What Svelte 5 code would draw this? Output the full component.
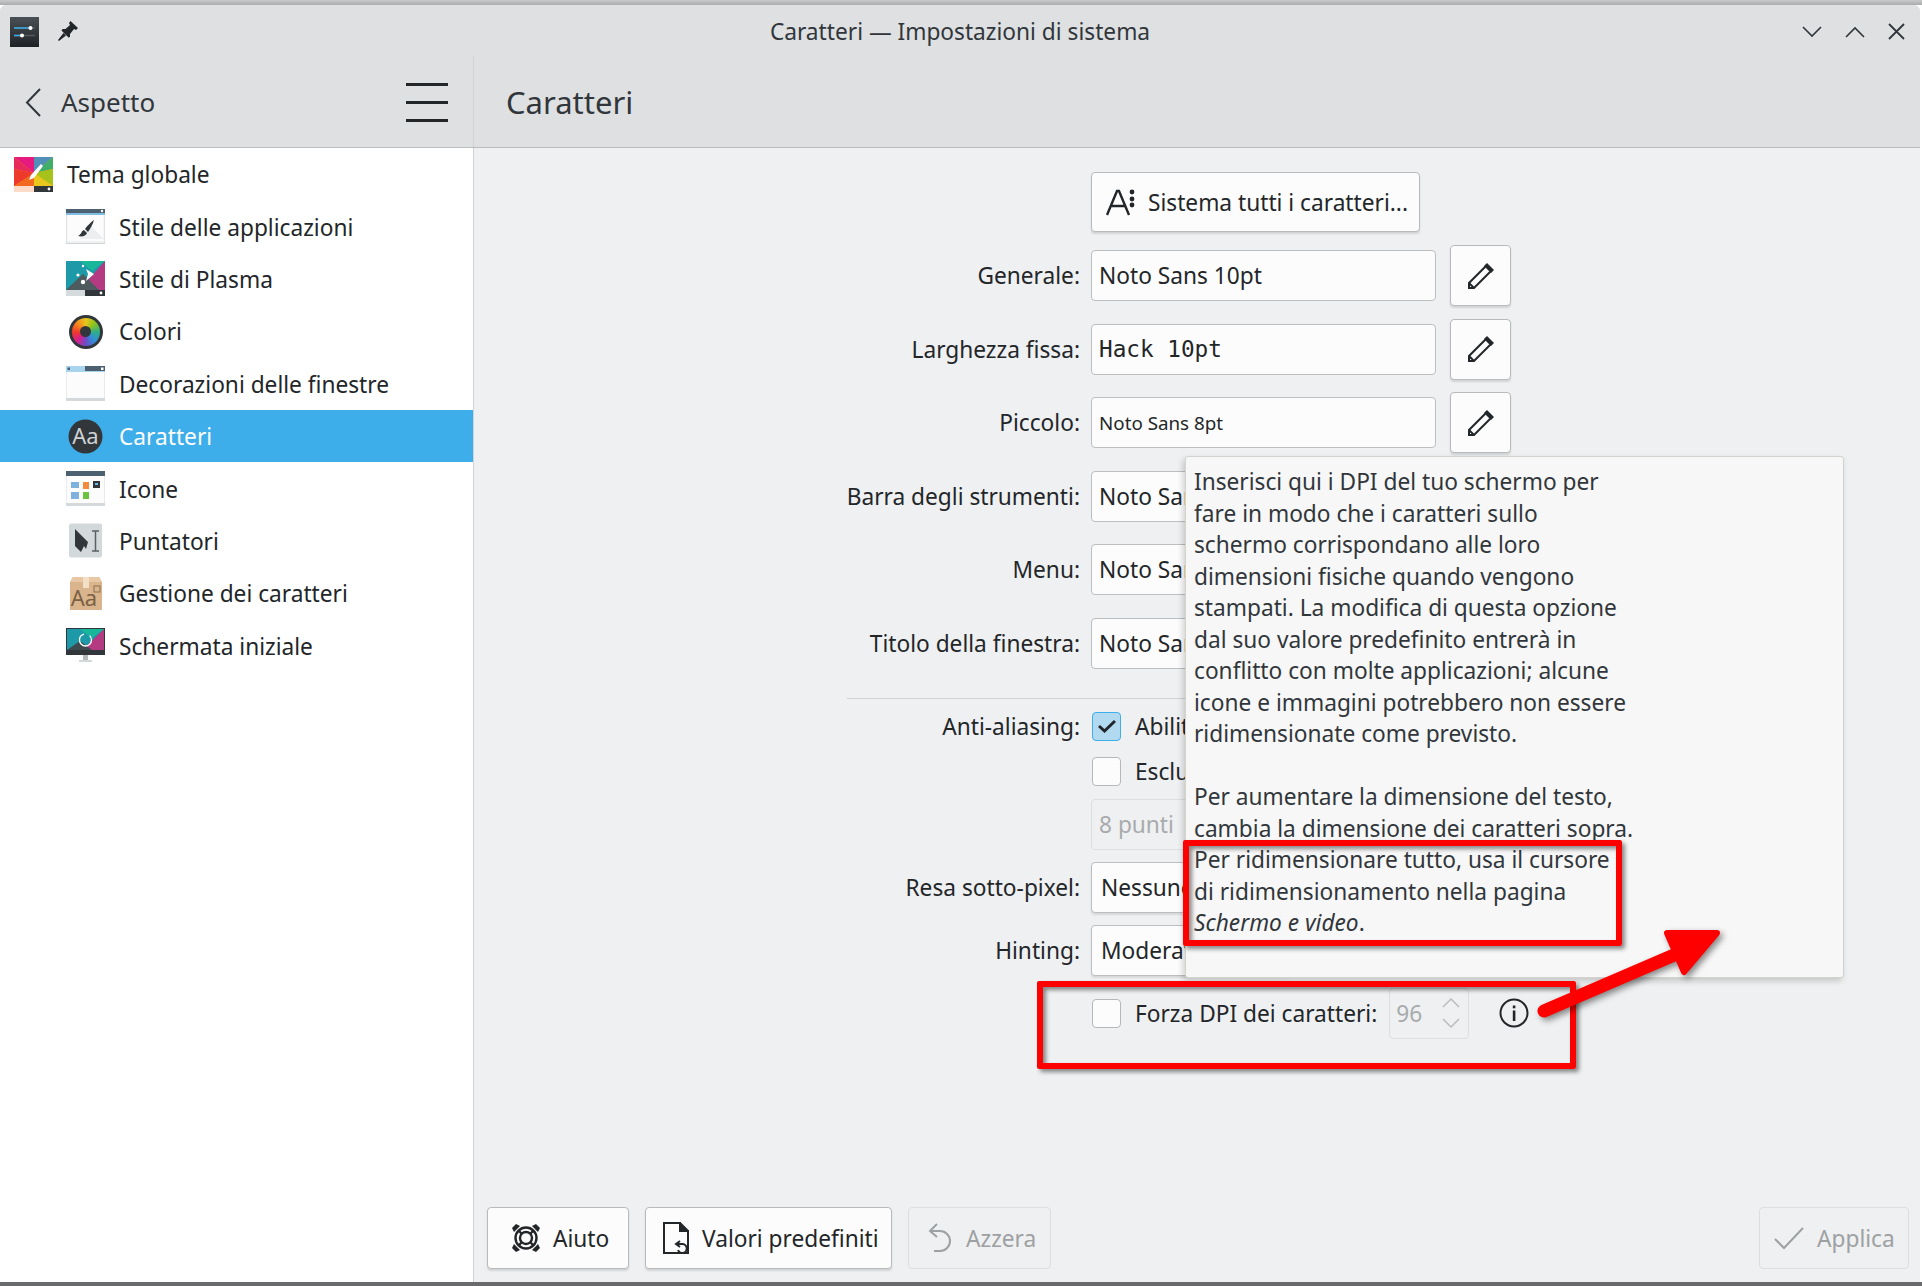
<script>
  const items = [
    { label: 'Tema globale', icon: 'theme', top: true },
    { label: 'Stile delle applicazioni', icon: 'appstyle' },
    { label: 'Stile di Plasma', icon: 'plasma' },
    { label: 'Colori', icon: 'colors' },
    { label: 'Decorazioni delle finestre', icon: 'deco' },
    { label: 'Caratteri', icon: 'fonts', selected: true },
    { label: 'Icone', icon: 'icons' },
    { label: 'Puntatori', icon: 'cursors' },
    { label: 'Gestione dei caratteri', icon: 'fontmgr' },
    { label: 'Schermata iniziale', icon: 'splash' }
  ];

  const fontRows = [
    { label: 'Generale:', value: 'Noto Sans 10pt', edit: true },
    { label: 'Larghezza fissa:', value: 'Hack 10pt', edit: true, kind: 'mono' },
    { label: 'Piccolo:', value: 'Noto Sans 8pt', edit: true, kind: 'small' },
    { label: 'Barra degli strumenti:', value: 'Noto Sans 10pt' },
    { label: 'Menu:', value: 'Noto Sans 10pt' },
    { label: 'Titolo della finestra:', value: 'Noto Sans 10pt' }
  ];
</script>

{#snippet icon(name)}
  <svg class="item-icon" viewBox="0 0 39 35" width="39" height="35" aria-hidden="true">
    {#if name === 'theme'}
      <rect width="39" height="35" fill="#f2a02a" />
      <polygon points="0,0 20,0 20,16" fill="#e5197e" />
      <polygon points="20,0 39,0 20,16" fill="#4f8fb8" />
      <polygon points="39,0 39,12 20,16" fill="#3fae6a" />
      <polygon points="39,12 39,29 20,16" fill="#a8c21c" />
      <polygon points="39,29 20,29 20,16" fill="#e8c81c" />
      <polygon points="20,29 0,29 20,16" fill="#f26a1e" />
      <polygon points="0,29 0,12 20,16" fill="#ee3a2a" />
      <polygon points="0,12 0,0 20,16" fill="#e82a5a" />
      <path d="M27 7 L17 18 L15 23 L20 21 L29 9 Z" fill="#fff" />
      <rect y="29" width="20" height="6" fill="#fcdcc8" />
      <rect x="20" y="29" width="19" height="6" fill="#31363b" />
      <circle cx="35" cy="32" r="1.4" fill="#fff" />
    {:else if name === 'appstyle'}
      <rect width="39" height="34" y="0.5" fill="#eff0f1" stroke="#d0d4d6" />
      <rect width="39" height="4" fill="#4d6070" />
      <rect y="4" width="39" height="2" fill="#7fbde2" />
      <rect x="1.500" y="6" width="36" height="26" fill="#fcfcfc" />
      <polygon points="24,16 38,30 14,30" fill="#eceeef" />
      <path d="M28 11 C25 13 21 17 19 20 L22 23 C24 20 27 15 28 11 Z M18 21 C15 22 16 25 12 27 C16 28 20 27 21 24 Z" fill="#31363b" />
      <circle cx="36" cy="2" r="1.200" fill="#fff" />
    {:else if name === 'plasma'}
      <rect width="39" height="29" fill="#1d99a8" />
      <polygon points="39,0 39,29 13,29" fill="#b43a82" />
      <polygon points="0,29 17,13 33,29" fill="#4d5a5e" />
      <polygon points="39,0 14,0 26,10" fill="#18b79a" />
      <path d="M20 8 L28 13 L20 20 L22 13 Z" fill="#fff" />
      <circle cx="17" cy="5" r="1.2" fill="#fff" /><circle cx="12" cy="14" r="1.6" fill="#fff" /><circle cx="17" cy="21" r="2.2" fill="#fff" />
      <rect y="29" width="19" height="6" fill="#d6dcde" />
      <rect x="19" y="29" width="20" height="6" fill="#31363b" />
      <circle cx="35" cy="32" r="1.4" fill="#fff" />
    {:else if name === 'colors'}
      <foreignObject width="39" height="35"><div class="wheel"><div class="wheel-in"><div class="wheel-hole"></div></div></div></foreignObject>
    {:else if name === 'deco'}
      <rect y="0.5" width="39" height="34" fill="#fcfcfc" stroke="#d5d9db" />
      <rect width="39" height="6" fill="#a8d4ee" />
      <rect x="19" width="20" height="5" fill="#4d6070" />
      <rect x="1.5" y="1.5" width="2.5" height="2.5" fill="#4d6070" />
      <rect x="35" y="1.5" width="2.5" height="2.5" fill="#fff" />
      <rect y="32" width="39" height="3" fill="#d5d9db" />
    {:else if name === 'fonts'}
      <circle cx="19.5" cy="17.5" r="17" fill="#31363b" />
      <text x="19.5" y="25" text-anchor="middle" class="aa">Aa</text>
    {:else if name === 'icons'}
      <rect y="0.5" width="39" height="34" fill="#fcfcfc" stroke="#d5d9db" />
      <rect width="39" height="5" fill="#4d6070" />
      <rect x="5" y="11" width="8" height="6" fill="#7fb1de" />
      <rect x="5" y="21" width="8" height="7" fill="#7fb1de" />
      <rect x="17" y="11" width="6" height="7" fill="#f58a3c" />
      <rect x="17" y="21" width="6" height="7" fill="#6cc33c" />
      <rect x="27" y="10" width="7" height="7" fill="#31363b" />
      <rect x="29" y="12" width="3" height="2" fill="#6cb8e6" />
      <rect y="32" width="39" height="3" fill="#d5d9db" />
    {:else if name === 'cursors'}
      <rect x="3" y="0.500" width="33" height="34" rx="2" fill="#d3d8da" />
      <path d="M9 6 L22 19 L20 26 L18 23 L15 29 L9 23 Z" fill="#31363b" />
      <path d="M26 8 H33 M29.500 8 V28 M26 28 H33" stroke="#5a6065" stroke-width="1.500" fill="none" />
    {:else if name === 'fontmgr'}
      <path d="M7 1 H33 L36 6 V34 H4 V6 Z" fill="#d9b48c" />
      <path d="M4 6 L7 1 H33 L36 6 Z" fill="#e8c8a4" />
      <rect x="17" y="1" width="6" height="11" fill="#f2dfc6" />
      <rect x="28" y="10" width="6" height="6" fill="none" stroke="#8a6e50" stroke-width="1" />
      <text x="18" y="30" text-anchor="middle" class="aa box">Aa</text>
    {:else if name === 'splash'}
      <rect width="39" height="27" fill="#31363b" />
      <rect x="1" y="1" width="37" height="21" fill="#1d99a8" />
      <polygon points="38,1 38,22 16,22" fill="#b43a82" />
      <polygon points="1,22 14,13 26,22" fill="#3f4a4e" />
      <polygon points="38,1 14,1 26,10" fill="#18b79a" />
      <circle cx="19.5" cy="12" r="6" fill="none" stroke="#fff" stroke-width="1.3" stroke-dasharray="26 6" />
      <rect x="17" y="27" width="5" height="5" fill="#b5babd" />
      <rect x="13" y="32" width="13" height="2" fill="#d3d8da" />
    {/if}
  </svg>
{/snippet}

{#snippet pencil()}
  <svg viewBox="0 0 28 28" width="28" height="28" fill="none" stroke="#232629" stroke-width="2" aria-hidden="true">
    <path d="M2 21 L19 4 L24 9 L7 26 L2 26 Z" />
    <path d="M2 21 L7 26" />
    <path d="M20 1 L27 8 L24 11 L17 4 Z" fill="#232629" stroke="none" />
  </svg>
{/snippet}

<div class="page">
  <div class="edge"></div>
  <div class="window">
    <header class="titlebar">
      <div class="app-icon">
        <svg viewBox="0 0 29 30" width="29" height="30" aria-hidden="true">
          <defs><linearGradient id="appg" x1="0" y1="0" x2="0" y2="1"><stop offset="0" stop-color="#4a5055" /><stop offset="1" stop-color="#1f2225" /></linearGradient></defs>
          <rect width="29" height="30" fill="url(#appg)" />
          <path d="M4 11 H25 M4 18.500 H25" stroke="#555a5f" stroke-width="1.5" />
          <path d="M4 11 H20 M4 18.500 H12" stroke="#3daee9" stroke-width="1.500" />
          <circle cx="20.500" cy="11" r="2" fill="#fff" /><circle cx="12" cy="18.500" r="2" fill="#fff" />
        </svg>
      </div>
      <svg class="pin" viewBox="0 0 20 20" width="20" height="20" aria-hidden="true">
        <path d="M12.500 0 L20 7 L18 9 L16 8 L12 13 L12 16 L10.500 16.500 L3.500 9.500 L4.500 8 L7.500 8 L12 4 L11 2 Z M5.500 12 L8 14.500 L1 20 L0 19 Z" fill="#232629" />
      </svg>
      <div class="window-title">Caratteri — Impostazioni di sistema</div>
      <div class="window-buttons">
        <svg viewBox="0 0 20 12" width="20" height="12" fill="none" stroke="#31363b" stroke-width="1.600"><path d="M1 1 L10 10 L19 1" /></svg>
        <svg viewBox="0 0 20 12" width="20" height="12" fill="none" stroke="#31363b" stroke-width="1.600"><path d="M1 11 L10 2 L19 11" /></svg>
        <svg viewBox="0 0 17 17" width="17" height="17" fill="none" stroke="#31363b" stroke-width="1.800"><path d="M1 1 L16 16 M16 1 L1 16" /></svg>
      </div>
    </header>

    <div class="toolbar">
      <div class="toolbar-left">
        <svg class="back" viewBox="0 0 16 29" width="16" height="29" fill="none" stroke="#31363b" stroke-width="2"><path d="M15 1 L2 14.500 L15 28" /></svg>
        <span class="crumb">Aspetto</span>
        <div class="burger"><span></span><span></span><span></span></div>
      </div>
      <div class="page-title">Caratteri</div>
    </div>

    <div class="body">
      <nav class="sidebar">
        {#each items as item}
          <div class="item" class:top={item.top} class:selected={item.selected}>
            {@render icon(item.icon)}
            <span>{item.label}</span>
          </div>
        {/each}
      </nav>

      <main class="content">
        <div class="form">
          <div class="row adjust-row">
            <span></span>
            <button class="btn adjust" type="button">
              <svg viewBox="0 0 30 30" width="30" height="30" aria-hidden="true">
                <path d="M1 28 L11 4 L13 4 L23 28 M5 19 H19" fill="none" stroke="#232629" stroke-width="2.400" />
                <circle cx="26" cy="5" r="2.400" fill="#232629" /><circle cx="26" cy="12" r="2.400" fill="#232629" /><circle cx="26" cy="18" r="2.400" fill="#232629" />
              </svg>
              Sistema tutti i caratteri...
            </button>
          </div>

          {#each fontRows as row}
            <div class="row font-row">
              <label>{row.label}</label>
              <div class="field {row.kind ?? ''}">{row.value}</div>
              {#if row.edit}
                <button class="btn edit" type="button">{@render pencil()}</button>
              {/if}
            </div>
          {/each}

          <div class="sep"></div>

          <div class="row check-row aa-row">
            <label>Anti-aliasing:</label>
            <div class="check-wrap">
              <span class="check on">
                <svg viewBox="0 0 18 14" width="18" height="14" fill="none" stroke="#232629" stroke-width="3"><path d="M1 7 L6.500 12 L17 2" /></svg>
              </span>
              <span>Abilitato</span>
            </div>
          </div>
          <div class="row check-row">
            <span></span>
            <div class="check-wrap">
              <span class="check"></span>
              <span>Escludi intervallo:</span>
            </div>
          </div>
          <div class="row points-row">
            <span></span>
            <div class="field disabled narrow">8 punti</div>
          </div>
          <div class="row combo-row">
            <label>Resa sotto-pixel:</label>
            <div class="field narrow combo">Nessuno</div>
          </div>
          <div class="row combo-row">
            <label>Hinting:</label>
            <div class="field narrow combo">Moderato</div>
          </div>

          <div class="row dpi-row">
            <span></span>
            <div class="check-wrap">
              <span class="check"></span>
              <span>Forza DPI dei caratteri:</span>
              <div class="spin">
                <span>96</span>
                <svg viewBox="0 0 20 34" width="20" height="34" fill="none" stroke="#b9bcbf" stroke-width="1.500"><path d="M2 11 L10 3 L18 11 M2 23 L10 31 L18 23" /></svg>
              </div>
              <svg class="info" viewBox="0 0 30 30" width="30" height="30" aria-hidden="true">
                <circle cx="15" cy="15" r="13.500" fill="none" stroke="#232629" stroke-width="2" />
                <rect x="13.800" y="12.500" width="2.600" height="10.500" fill="#232629" />
                <rect x="13.800" y="7.500" width="2.600" height="2.800" fill="#232629" />
              </svg>
            </div>
          </div>
        </div>

        <footer class="footer">
          <button class="btn foot" type="button">
            <svg viewBox="0 0 30 30" width="30" height="30" fill="none" aria-hidden="true">
              <circle cx="15" cy="15" r="10.500" stroke="#232629" stroke-width="2.400" />
              <circle cx="15" cy="15" r="6" stroke="#232629" stroke-width="2.400" />
              <path d="M7.500 7.500 L11 11 M22.500 7.500 L19 11 M7.500 22.500 L11 19 M22.500 22.500 L19 19" stroke="#232629" stroke-width="2.400" />
              <path d="M1 5 L5 1 L9 3 L3 9 Z M29 5 L25 1 L21 3 L27 9 Z M1 25 L5 29 L9 27 L3 21 Z M29 25 L25 29 L21 27 L27 21 Z" fill="#232629" />
            </svg>
            Aiuto
          </button>
          <button class="btn foot" type="button">
            <svg viewBox="0 0 26 32" width="26" height="32" fill="none" stroke="#232629" stroke-width="2" aria-hidden="true">
              <path d="M18 1 H1 V31 H25 V8" />
              <path d="M17 1 L25 9 H17 Z" fill="#232629" />
              <path d="M17 19 L13 22 L17 25 M13 22 H19 A4.500 4.500 0 1 1 15 28" />
            </svg>
            Valori predefiniti
          </button>
          <button class="btn foot off" type="button">
            <svg viewBox="0 0 24 30" width="24" height="30" fill="none" stroke="#9ea1a3" stroke-width="2" aria-hidden="true">
              <path d="M9 1 L2 8 L9 14 M2 8 H12 A9.500 9.500 0 0 1 12 28 H6" />
            </svg>
            Azzera
          </button>
          <div class="spacer"></div>
          <button class="btn foot off apply" type="button">
            <svg viewBox="0 0 30 24" width="30" height="24" fill="none" stroke="#9ea1a3" stroke-width="2" aria-hidden="true">
              <path d="M1 13 L10 22 L29 2" />
            </svg>
            Applica
          </button>
        </footer>
      </main>
    </div>
  </div>
  <div class="bottom-edge"></div>

  <div class="tooltip">
    Inserisci qui i DPI del tuo schermo per<br />
    fare in modo che i caratteri sullo<br />
    schermo corrispondano alle loro<br />
    dimensioni fisiche quando vengono<br />
    stampati. La modifica di questa opzione<br />
    dal suo valore predefinito entrerà in<br />
    conflitto con molte applicazioni; alcune<br />
    icone e immagini potrebbero non essere<br />
    ridimensionate come previsto.<br />
    <br />
    Per aumentare la dimensione del testo,<br />
    cambia la dimensione dei caratteri sopra.<br />
    Per ridimensionare tutto, usa il cursore<br />
    di ridimensionamento nella pagina<br />
    <em>Schermo e video</em>.
  </div>

  <div class="mark mark-text"></div>
  <div class="mark mark-dpi"></div>
  <svg class="arrow" viewBox="0 0 1922 1286" width="1922" height="1286" aria-hidden="true">
    <path d="M1544 1011 L1695 946" stroke="#ff0000" stroke-width="13" stroke-linecap="round" fill="none" />
    <path d="M1667 933 L1717 933 L1684 972 Z" fill="#ff0000" stroke="#ff0000" stroke-width="6" stroke-linejoin="round" />
  </svg>
</div>

<style>
  :global(body) {
    margin: 0;
    background: #fff;
  }

  .page {
    position: relative;
    display: flex;
    flex-direction: column;
    width: 1922px;
    height: 1286px;
    overflow: hidden;
    font-family: 'Noto Sans', sans-serif;
    font-size: 22.7px;
    color: #232629;
  }

  .edge {
    height: 5px;
    flex: none;
    background: linear-gradient(#c9c9c9, #a9abad);
  }

  .window {
    flex: 1;
    min-height: 0;
    display: flex;
    flex-direction: column;
    margin-right: 2px;
    border-radius: 6px 6px 0 0;
    background: #eff0f1;
    overflow: hidden;
  }

  .titlebar {
    position: relative;
    flex: none;
    display: flex;
    align-items: center;
    height: 52px;
    padding-left: 10px;
    background: #dee0e2;
  }

  .app-icon {
    display: flex;
    margin-top: 1px;
  }

  .pin {
    margin-left: 19px;
  }

  .window-title {
    position: absolute;
    left: 0;
    right: 0;
    top: 11px;
    text-align: center;
    font-size: 22.7px;
    color: #31363b;
  }

  .window-buttons {
    position: absolute;
    top: 18px;
    right: 15px;
    display: flex;
    align-items: center;
    gap: 23px;
  }

  .toolbar {
    flex: none;
    display: flex;
    height: 90px;
    background: #dee0e2;
    border-bottom: 1px solid #b9bcbf;
  }

  .toolbar-left {
    width: 474px;
    flex: none;
    display: flex;
    align-items: center;
    border-right: 1px solid #d0d2d4;
    padding-left: 25px;
    padding-right: 25px;
    box-sizing: border-box;
  }

  .crumb {
    margin-left: 20px;
    font-size: 26px;
    color: #31363b;
  }

  .burger {
    margin-left: auto;
    width: 42px;
    display: flex;
    flex-direction: column;
    gap: 15px;
  }

  .burger span {
    height: 3px;
    background: #232629;
  }

  .page-title {
    margin-left: 32px;
    align-self: center;
    font-size: 31px;
    color: #31363b;
  }

  .body {
    flex: 1;
    min-height: 0;
    display: flex;
  }

  .sidebar {
    width: 474px;
    flex: none;
    box-sizing: border-box;
    background: #fff;
    border-right: 1px solid #d0d2d4;
  }

  .item {
    display: flex;
    align-items: center;
    gap: 14px;
    height: 52.4px;
    padding-left: 66px;
  }

  .item span {
    padding-top: 1px;
  }

  .item.top {
    padding-left: 14px;
  }

  .item.selected {
    background: #3daee9;
    color: #fcfcfc;
  }

  .item-icon {
    flex: none;
  }

  .wheel {
    width: 34px;
    height: 34px;
    margin: 0.5px auto 0;
    padding: 3px;
    box-sizing: border-box;
    border-radius: 50%;
    background: #31363b;
  }

  .wheel-in {
    display: flex;
    align-items: center;
    justify-content: center;
    width: 100%;
    height: 100%;
    border-radius: 50%;
    background: conic-gradient(#e8c81c, #8cc21c, #2fae8a, #2f8fd8, #6a4fc8, #d81e8c, #ee3a2a, #f58a1e, #e8c81c);
  }

  .wheel-hole {
    width: 11px;
    height: 11px;
    border-radius: 50%;
    background: #31363b;
  }

  .aa {
    font-size: 22px;
    fill: #cfd2d4;
  }

  .aa.box {
    fill: #7a6044;
  }

  .content {
    flex: 1;
    min-width: 0;
    display: flex;
    flex-direction: column;
  }

  .form {
    flex: 1;
    min-height: 0;
    padding-top: 24px;
  }

  .row {
    display: grid;
    grid-template-columns: 606px auto 1fr;
    column-gap: 11px;
    align-items: center;
  }

  .row label {
    text-align: right;
    white-space: nowrap;
  }

  .adjust-row {
    height: 60px;
    margin-bottom: 18px;
  }

  .font-row {
    height: 51px;
    margin-bottom: 22.5px;
  }

  .btn {
    display: flex;
    align-items: center;
    box-sizing: border-box;
    border: 1px solid #b8babc;
    border-radius: 4px;
    background: #fcfcfc;
    box-shadow: 0 2px 2px rgba(0, 0, 0, 0.12);
    font: inherit;
    color: #232629;
  }

  .adjust {
    justify-self: start;
    width: 329px;
    height: 60px;
    padding: 0 0 0 14px;
    gap: 12px;
    white-space: nowrap;
  }

  .field {
    box-sizing: border-box;
    width: 345px;
    height: 51px;
    padding-left: 7px;
    display: flex;
    align-items: center;
    border: 1px solid #bcbebf;
    border-radius: 4px;
    background: #fcfcfc;
    white-space: nowrap;
    overflow: hidden;
  }

  .field.mono {
    font-family: 'DejaVu Sans Mono', monospace;
    font-size: 22.7px;
  }

  .field.small {
    font-size: 18.8px;
  }

  .field.narrow {
    width: 200px;
  }

  .field.combo {
    padding-left: 9px;
    box-shadow: 0 2px 2px rgba(0, 0, 0, 0.1);
  }

  .field.disabled {
    color: #a8abad;
    background: #eff0f1;
    border-color: #dcdee0;
  }

  .edit {
    justify-self: start;
    justify-content: center;
    width: 61px;
    height: 61px;
    padding: 0;
    margin: -5px 0 -5px 3px;
  }

  .sep {
    height: 1px;
    margin: 29px 0 0 373px;
    width: 664px;
    background: #cfd1d3;
  }

  .check-row {
    height: 28px;
    margin-bottom: 15px;
  }

  .aa-row {
    margin-top: 12px;
    margin-bottom: 17px;
  }

  .check-wrap {
    display: flex;
    align-items: center;
    gap: 14px;
    white-space: nowrap;
  }

  .check {
    flex: none;
    display: flex;
    align-items: center;
    justify-content: center;
    box-sizing: border-box;
    width: 29px;
    height: 29px;
    margin-left: 1px;
    border: 1px solid #b5b7b9;
    border-radius: 4px;
    background: #fcfcfc;
  }

  .check.on {
    border-color: #3daee9;
    background: #b1d9f0;
  }

  .points-row {
    height: 51px;
    margin-bottom: 12px;
  }

  .combo-row {
    height: 51px;
    margin-bottom: 12px;
  }

  .dpi-row {
    height: 51px;
  }

  .spin {
    box-sizing: border-box;
    display: flex;
    align-items: center;
    justify-content: space-between;
    width: 80px;
    height: 51px;
    margin-left: -2px;
    padding: 0 7px 0 6px;
    border: 1px solid #dcdee0;
    border-radius: 4px;
    color: #a8abad;
  }

  .info {
    margin-left: 16px;
  }

  .footer {
    flex: none;
    display: flex;
    gap: 16px;
    padding: 0 11px 13px 13px;
  }

  .foot {
    height: 62px;
    padding: 0 12px;
    gap: 12px;
    white-space: nowrap;
  }

  .foot:nth-child(1) {
    width: 142px;
    padding-left: 23px;
  }

  .foot:nth-child(2) {
    width: 247px;
    padding-left: 17px;
    gap: 13px;
  }

  .foot:nth-child(3) {
    width: 143px;
    padding-left: 19px;
    gap: 14px;
  }

  .foot.off {
    color: #9ea1a3;
    background: #eff0f1;
    border-color: #dcdee0;
    box-shadow: none;
  }

  .foot.apply {
    width: 150px;
    padding-left: 14px;
    gap: 13px;
  }

  .spacer {
    flex: 1;
  }

  .bottom-edge {
    flex: none;
    height: 4px;
    background: #686a6c;
  }

  .tooltip {
    position: absolute;
    left: 1185px;
    top: 456px;
    box-sizing: border-box;
    width: 659px;
    height: 522px;
    padding: 9px 8px;
    border: 1px solid #d3d3cd;
    border-radius: 3px;
    background: #f7f7f7;
    box-shadow: -2px 3px 6px rgba(0, 0, 0, 0.18);
    line-height: 31.5px;
    font-size: 22.7px;
    color: #31363b;
    white-space: nowrap;
  }

  .mark {
    position: absolute;
    box-sizing: border-box;
    border: 6px solid #ff0000;
    border-radius: 2px;
    box-shadow: 3px 3px 4px rgba(0, 0, 0, 0.45), inset 3px 3px 4px rgba(0, 0, 0, 0.45);
  }

  .mark-text {
    left: 1183px;
    top: 840px;
    width: 439px;
    height: 106px;
  }

  .mark-dpi {
    left: 1037px;
    top: 981px;
    width: 539px;
    height: 88px;
  }

  .arrow {
    position: absolute;
    left: 0;
    top: 0;
    filter: drop-shadow(3px 3px 3px rgba(0, 0, 0, 0.45));
    pointer-events: none;
  }
</style>
